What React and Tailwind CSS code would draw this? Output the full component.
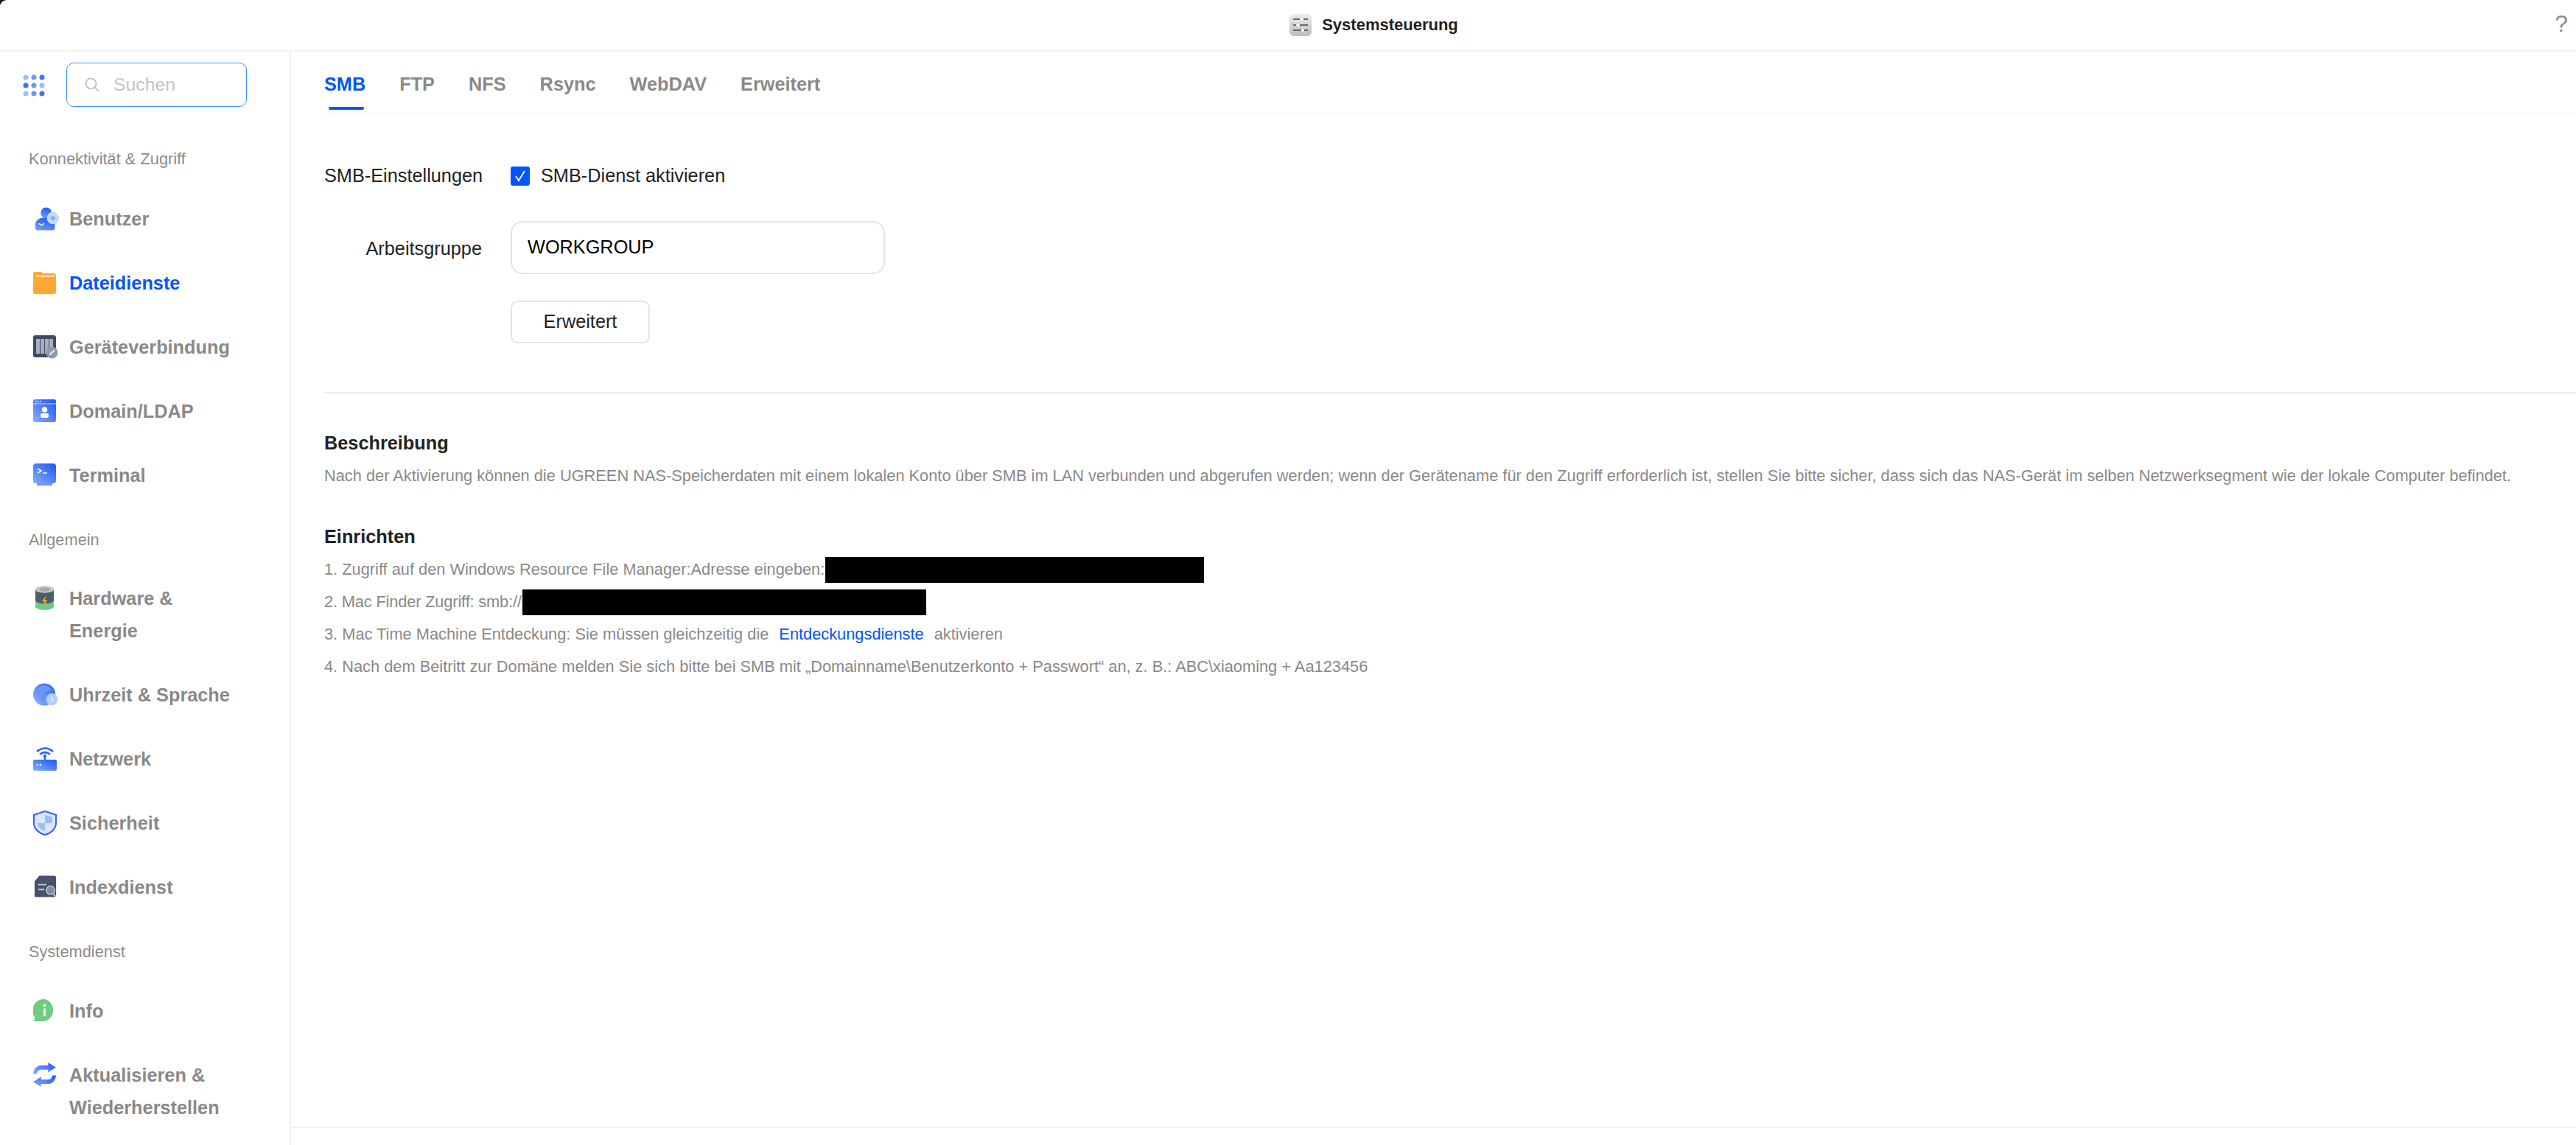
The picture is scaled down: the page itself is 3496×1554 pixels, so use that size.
const FONT = "font-['Liberation_Sans',Arial,sans-serif]";

const Grad = ({ id, a = "#1f55f5", b = "#86aefb" }) => (
  <defs>
    <linearGradient id={id} x1="1" y1="0" x2="0" y2="1">
      <stop offset="0" stopColor={a} />
      <stop offset="1" stopColor={b} />
    </linearGradient>
  </defs>
);

const UserIcon = () => (
  <svg className="ml-[2px]" width="33" height="32" viewBox="0 0 36 34">
    <defs>
      <linearGradient id="u" x1="0.8" y1="0" x2="0.2" y2="1">
        <stop offset="0" stopColor="#1f55f5" />
        <stop offset="1" stopColor="#6f9cfa" />
      </linearGradient>
    </defs>
    <circle cx="17" cy="8" r="8" fill="url(#u)" />
    <path d="M1 26c0-7 6-11 14-11s15 4 15 11v4a4 4 0 0 1-4 4H5a4 4 0 0 1-4-4z" fill="url(#u)" />
    <path d="M6 24l4 2.500 4-2.500" stroke="#fff" strokeWidth="1.500" fill="none" />
    <circle cx="27" cy="16" r="9" fill="#c6d8fc" />
    <circle cx="27" cy="16" r="3.500" fill="#8fb0f6" />
  </svg>
);
const FolderIcon = () => (
  <svg width="31" height="30" viewBox="0 0 32 31">
    <path d="M2 0h9l3 2h15a3 3 0 0 1 3 3v23a3 3 0 0 1-3 3H3a3 3 0 0 1-3-3V2a2 2 0 0 1 2-2z" fill="#ffa733" />
    <rect x="4" y="5" width="26" height="2" fill="#ffe3b8" />
  </svg>
);
const DeviceIcon = () => (
  <svg width="34" height="32" viewBox="0 0 34 32">
    <rect x="0" y="0" width="31" height="30" rx="3" fill="#3f4a63" />
    <rect x="4" y="5" width="5" height="20" fill="#a9afbd" />
    <rect x="10" y="5" width="5" height="20" fill="#a9afbd" />
    <rect x="16" y="5" width="5" height="20" fill="#a9afbd" />
    <rect x="22" y="5" width="5" height="14" fill="#a9afbd" />
    <circle cx="25.500" cy="23.500" r="8" fill="#8f9ab3" />
    <path d="M23 26l5-5" stroke="#e6e9f0" strokeWidth="2.400" strokeLinecap="round" />
  </svg>
);
const DomainIcon = () => (
  <svg width="31" height="31" viewBox="0 0 31 31">
    <Grad id="d" />
    <rect width="31" height="31" rx="3" fill="url(#d)" />
    <rect y="5.500" width="31" height="1" fill="#cfe0ff" />
    <circle cx="4" cy="3" r="1" fill="#cfe0ff" />
    <circle cx="7" cy="3" r="1" fill="#cfe0ff" />
    <circle cx="10" cy="3" r="1" fill="#cfe0ff" />
    <circle cx="15.500" cy="14" r="3.800" fill="#fff" />
    <rect x="10" y="19" width="11" height="6" rx="2" fill="#fff" />
  </svg>
);
const TerminalIcon = () => (
  <svg width="31" height="31" viewBox="0 0 31 31">
    <Grad id="t" />
    <rect width="31" height="27" rx="4" fill="url(#t)" />
    <rect x="5" y="27" width="21" height="3" rx="1" fill="#6d97f8" />
    <path d="M6 7l5 3-5 3" stroke="#fff" strokeWidth="1.500" fill="none" />
    <path d="M13 13h6" stroke="#fff" strokeWidth="1.500" />
  </svg>
);
const HardwareIcon = () => (
  <svg className="ml-[3px]" width="25" height="33" viewBox="0 0 26 34">
    <path d="M0 5v24c0 3 6 5 13 5s13-2 13-5V5z" fill="#6fcb7f" />
    <path d="M0 5v15c0 3 6 5 13 5s13-2 13-5V5z" fill="#4c5d6c" />
    <ellipse cx="13" cy="5" rx="13" ry="5" fill="#c7c7c7" />
    <ellipse cx="13" cy="5" rx="8" ry="3" fill="#a8a8a8" />
    <path d="M15 14l-6 8h4l-2 7 6-9h-4z" fill="#ffa733" />
  </svg>
);
const GlobeIcon = () => (
  <svg width="34" height="31" viewBox="0 0 36 32">
    <Grad id="g" a="#2f60f6" b="#93b7fb" />
    <circle cx="16" cy="16" r="16" fill="url(#g)" />
    <path d="M16 3c5 0 8 3 10 6-2 3-7 1-9 4-3 3-9 0-12-2 2-5 6-8 11-8z" fill="#6c95f8" />
    <circle cx="27" cy="23" r="8.500" fill="#b4cdfc" />
    <path d="M27 18v5l2 3" stroke="#fff" strokeWidth="1.400" fill="none" />
  </svg>
);
const NetworkIcon = () => (
  <svg width="32" height="32" viewBox="0 0 32 32">
    <Grad id="n" />
    <path d="M5 6c7-6 15-6 22 0M9 10c5-4 9-4 14 0" stroke="#2f62f6" strokeWidth="2.600" fill="none" />
    <circle cx="16" cy="12" r="2.200" fill="#2f62f6" />
    <rect x="14.800" y="12" width="2.400" height="6" fill="#2f62f6" />
    <rect x="0" y="17" width="32" height="15" rx="2" fill="url(#n)" />
    <circle cx="6" cy="24" r="1.200" fill="#fff" />
    <circle cx="10" cy="24" r="1.200" fill="#fff" />
  </svg>
);
const ShieldIcon = () => (
  <svg width="32" height="34" viewBox="0 0 32 34">
    <path d="M16 1l15 5v11c0 8-7 14-15 16C8 31 1 25 1 17V6z" fill="#dbe6fd" stroke="#2f62f6" strokeWidth="2" />
    <path d="M16 6l10 3v8H16zM16 17v11c-5-2-10-6-10-11z" fill="#9dbcf9" />
  </svg>
);
const IndexIcon = () => (
  <svg className="ml-[1px]" width="32" height="31" viewBox="0 0 34 32">
    <path d="M8 0h21a3 3 0 0 1 3 3v26a2 2 0 0 1-2 2H3a2 2 0 0 1-2-2V8z" fill="#46526e" />
    <path d="M6 13h12M6 20h9" stroke="#c4c9d4" strokeWidth="2" />
    <circle cx="24" cy="21" r="6" fill="#7f8aa3" stroke="#c4c9d4" strokeWidth="1.500" />
    <path d="M28 26l4 5" stroke="#c4c9d4" strokeWidth="2" />
  </svg>
);
const InfoIcon = () => (
  <svg width="31" height="31" viewBox="0 0 32 32">
    <path d="M16 0a16 16 0 0 1 0 31H0c2-1 2.500-3 2-6A16 16 0 0 1 16 0z" fill="#6fcb7f" />
    <circle cx="16" cy="9" r="2.200" fill="#e9f8ec" />
    <rect x="14.500" y="13" width="3" height="11" rx="1" fill="#e9f8ec" />
  </svg>
);
const UpdateIcon = () => (
  <svg width="31" height="33" viewBox="0 0 32 34">
    <Grad id="r" />
    <path d="M21 0l11 7-11 7v-4H12c-4 0-6 2-7 6H0c1-8 5-12 12-12h9z" fill="url(#r)" />
    <path d="M11 34L0 27l11-7v4h9c4 0 6-2 7-6h5c-1 8-5 12-12 12h-9z" fill="url(#r)" />
  </svg>
);

const TitleIcon = () => (
  <svg width="30" height="30" viewBox="0 0 30 30">
    <defs>
      <linearGradient id="ti" x1="0" y1="0" x2="0" y2="1">
        <stop offset="0" stopColor="#ececec" />
        <stop offset="1" stopColor="#bdbdbd" />
      </linearGradient>
    </defs>
    <rect width="30" height="30" rx="6" fill="url(#ti)" />
    <path d="M5 7h9M19 7h6M5 15h4M14 15h11M5 22h11M20 22h5" stroke="#444" strokeWidth="1.600" />
    <circle cx="16.500" cy="7" r="1.800" fill="#fff" />
    <circle cx="11.500" cy="15" r="1.800" fill="#fff" />
    <circle cx="18" cy="22" r="1.800" fill="#fff" />
  </svg>
);

const AppsIcon = () => {
  const dots = [
    [5, 6, "#9dbcfc"], [16, 6, "#6d98fa"], [27, 6, "#3e73f8"],
    [5, 17, "#3e73f8"], [16, 17, "#6d98fa"], [27, 17, "#9dbcfc"],
    [5, 28, "#9dbcfc"], [16, 28, "#6d98fa"], [27, 28, "#3e73f8"],
  ];
  return (
    <svg width="32" height="32" viewBox="0 0 32 32">
      {dots.map(([x, y, c], i) => (
        <circle key={i} cx={x} cy={y} r={3.500} fill={c} />
      ))}
    </svg>
  );
};

const SectionLabel = ({ children, className = "" }) => (
  <div className={`pl-[39px] text-[21.8px] leading-[28px] text-[#8f8b8b] ${className}`}>{children}</div>
);

const NavItem = ({ icon, lines, active }) => (
  <div className="flex items-start py-[21.5px] pl-[45px]">
    <div className="flex h-[44px] w-[49px] shrink-0 items-center">{icon}</div>
    <div className={`text-[25.3px] font-bold leading-[44px] ${active ? "text-[#0055ff]" : "text-[#8b8888]"}`}>
      {lines.map((l) => (
        <div key={l}>{l}</div>
      ))}
    </div>
  </div>
);

const Tab = ({ children, active }) => (
  <div className="relative">
    <span className={`text-[25.3px] font-bold leading-[28px] ${active ? "text-[#0055ff]" : "text-[#8b8888]"}`}>{children}</span>
    {active && <div className="absolute left-[6px] top-[45px] h-[4px] w-[48px] rounded-full bg-[#0055ff]" />}
  </div>
);

const Redacted = ({ w }) => <span className="ml-[1px] inline-block h-[35px] bg-black" style={{ width: w }} />;

export default function App() {
  return (
    <div className={`flex h-[1554px] w-[3496px] flex-col overflow-hidden bg-white ${FONT}`}>
      <header className="relative flex h-[70px] shrink-0 items-center justify-center border-b-2 border-[#f0f0f0] pl-[233px]">
        <svg className="absolute left-0 top-0" width="9" height="7" viewBox="0 0 9 7">
          <path d="M0 0H9Q2 1 0 7z" fill="#1a1326" />
        </svg>
        <div className="flex items-center gap-[14px]">
          <TitleIcon />
          <span className="text-[22px] font-bold leading-[30px] text-[#222]">Systemsteuerung</span>
        </div>
        <span className="absolute right-[11px] top-[14px] text-[32px] leading-[36px] text-[#8b8b8b]">?</span>
      </header>

      <div className="flex min-h-0 flex-1">
        <aside className="flex w-[395px] shrink-0 flex-col border-r-2 border-[#f2f2f2]">
          <div className="flex items-center gap-[28px] pl-[30px] pt-[15px]">
            <AppsIcon />
            <div className="flex h-[60px] w-[245px] items-center rounded-[10px] border border-[#3b95f5] pl-[24px]">
              <svg width="20" height="20" viewBox="0 0 20 20" fill="none" stroke="#bdbdbd" strokeWidth="1.700">
                <circle cx="8.500" cy="8.500" r="7" />
                <path d="M13.500 13.500L19 19" />
              </svg>
              <span className="ml-[19px] text-[24.800px] text-[#c4c4c4]">Suchen</span>
            </div>
          </div>
          <SectionLabel className="mt-[57px] mb-[23px]">Konnektivität &amp; Zugriff</SectionLabel>
          <NavItem icon={<UserIcon />} lines={["Benutzer"]} />
          <NavItem icon={<FolderIcon />} lines={["Dateidienste"]} active />
          <NavItem icon={<DeviceIcon />} lines={["Geräteverbindung"]} />
          <NavItem icon={<DomainIcon />} lines={["Domain/LDAP"]} />
          <NavItem icon={<TerminalIcon />} lines={["Terminal"]} />
          <SectionLabel className="mt-[31px] mb-[21px]">Allgemein</SectionLabel>
          <NavItem icon={<HardwareIcon />} lines={["Hardware &", "Energie"]} />
          <NavItem icon={<GlobeIcon />} lines={["Uhrzeit & Sprache"]} />
          <NavItem icon={<NetworkIcon />} lines={["Netzwerk"]} />
          <NavItem icon={<ShieldIcon />} lines={["Sicherheit"]} />
          <NavItem icon={<IndexIcon />} lines={["Indexdienst"]} />
          <SectionLabel className="mt-[31px] mb-[22px]">Systemdienst</SectionLabel>
          <NavItem icon={<InfoIcon />} lines={["Info"]} />
          <NavItem icon={<UpdateIcon />} lines={["Aktualisieren &", "Wiederherstellen"]} />
        </aside>

        <main className="flex min-w-0 flex-1 flex-col">
          <div className="ml-[45px] flex h-[85px] shrink-0 items-start gap-[46px] border-b border-[#f0f0f0] pt-[30px]">
            <Tab active>SMB</Tab>
            <Tab>FTP</Tab>
            <Tab>NFS</Tab>
            <Tab>Rsync</Tab>
            <Tab>WebDAV</Tab>
            <Tab>Erweitert</Tab>
          </div>

          <div className="ml-[45px] flex h-[379px] shrink-0 flex-col border-b-2 border-[#ededed] pt-[68px] text-[25.3px]">
            <div className="flex h-[32px] items-center">
              <div className="w-[253px] whitespace-nowrap pr-[39px] text-right text-[#222]">SMB-Einstellungen</div>
              <div className="flex h-[26px] w-[26px] items-center justify-center rounded-[3px] bg-[#0055ff]">
                <svg width="18" height="20" viewBox="0 0 18 20" fill="none" stroke="#fff" strokeWidth="1.800">
                  <path d="M3 10l4 6L15 3" />
                </svg>
              </div>
              <span className="ml-[15px] text-[#222]">SMB-Dienst aktivieren</span>
            </div>
            <div className="mt-[45px] flex items-center">
              <div className="w-[253px] pr-[39px] pt-[4px] text-right text-[#222]">Arbeitsgruppe</div>
              <div className="flex h-[72px] w-[508px] items-center rounded-[16px] border-2 border-[#e4e4e4] pl-[21px] text-black">WORKGROUP</div>
            </div>
            <div className="ml-[253px] mt-[36px]">
              <div className="flex h-[58px] w-[189px] items-center justify-center rounded-[10px] border-2 border-[#e4e4e4] text-[#222]">Erweitert</div>
            </div>
          </div>

          <div className="ml-[45px] pt-[51px]">
            <h2 className="text-[25.3px] font-bold leading-[32px] text-[#222]">Beschreibung</h2>
            <p className="mt-[14px] whitespace-nowrap text-[21.8px] leading-[30px] text-[#8b8888]">
              Nach der Aktivierung können die UGREEN NAS-Speicherdaten mit einem lokalen Konto über SMB im LAN verbunden und abgerufen werden; wenn der Gerätename für den Zugriff erforderlich ist, stellen Sie bitte sicher, dass sich das NAS-Gerät im selben Netzwerksegment wie der lokale Computer befindet.
            </p>
            <h2 className="mt-[51px] text-[25.3px] font-bold leading-[32px] text-[#222]">Einrichten</h2>
            <div className="mt-[7px] text-[21.8px] leading-[44px] text-[#8b8888]">
              <div className="flex h-[44px] items-center">1. Zugriff auf den Windows Resource File Manager:Adresse eingeben:<Redacted w={514} /></div>
              <div className="flex h-[44px] items-center"><span className="tracking-[-0.15px]">2. Mac Finder Zugriff: smb://</span><Redacted w={548} /></div>
              <div className="flex h-[44px] items-center">3. Mac Time Machine Entdeckung: Sie müssen gleichzeitig die<span className="mx-[14px] text-[#0055ff]">Entdeckungsdienste</span>aktivieren</div>
              <div className="flex h-[44px] items-center">4. Nach dem Beitritt zur Domäne melden Sie sich bitte bei SMB mit „Domainname\Benutzerkonto + Passwort“ an, z. B.: ABC\xiaoming + Aa123456</div>
            </div>
          </div>
          <div className="mt-auto mb-[23px] h-[1px] bg-[#eeeeee]" />
        </main>
      </div>
    </div>
  );
}
